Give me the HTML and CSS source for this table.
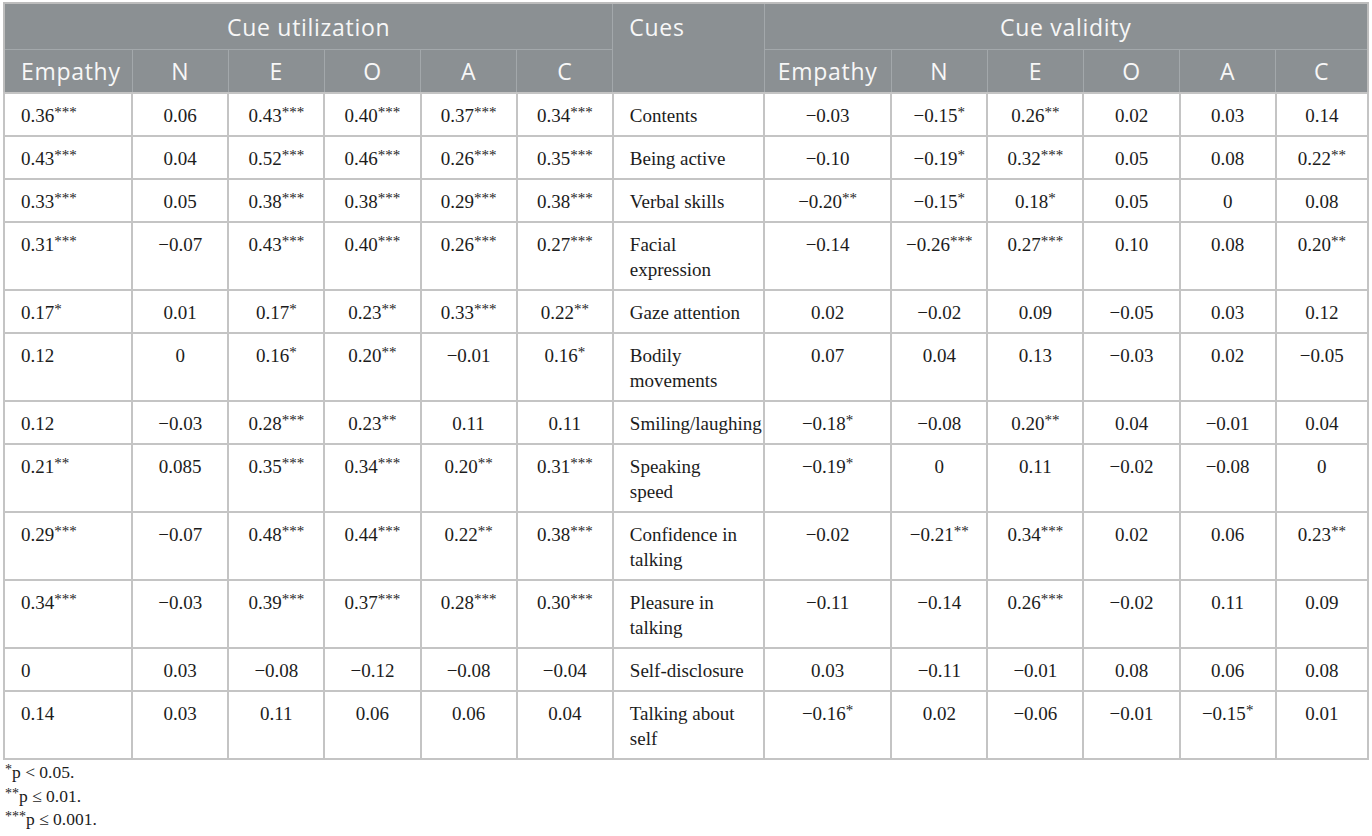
FILE: index.html
```html
<!DOCTYPE html>
<html lang="en">
<head>
    <meta charset="UTF-8">
    <meta name="viewport" content="width=device-width, initial-scale=1.0">
    <title>Cue utilization and cue validity</title>
    <link rel="stylesheet" href="styles.css">
</head>
<body>
    <div class="table-wrap">
        <table class="cues-table">
            <colgroup>
                <col class="c-emp">
                <col class="c-num"><col class="c-num"><col class="c-num"><col class="c-num"><col class="c-num">
                <col class="c-cue">
                <col class="c-emp2">
                <col class="c-num"><col class="c-num"><col class="c-num"><col class="c-num">
                <col class="c-last">
            </colgroup>
            <thead>
                <tr class="head-top">
                    <th colspan="6">Cue utilization</th>
                    <th rowspan="2" class="left">Cues</th>
                    <th colspan="6">Cue validity</th>
                </tr>
                <tr class="head-sub">
                    <th class="left">Empathy</th>
                    <th>N</th><th>E</th><th>O</th><th>A</th><th>C</th>
                    <th>Empathy</th>
                    <th>N</th><th>E</th><th>O</th><th>A</th><th>C</th>
                </tr>
            </thead>
            <tbody>
                <tr>
                    <td class="left">0.36<sup>***</sup></td><td>0.06</td><td>0.43<sup>***</sup></td><td>0.40<sup>***</sup></td><td>0.37<sup>***</sup></td><td>0.34<sup>***</sup></td>
                    <td class="cue">Contents</td>
                    <td>−0.03</td><td>−0.15<sup>*</sup></td><td>0.26<sup>**</sup></td><td>0.02</td><td>0.03</td><td>0.14</td>
                </tr>
                <tr>
                    <td class="left">0.43<sup>***</sup></td><td>0.04</td><td>0.52<sup>***</sup></td><td>0.46<sup>***</sup></td><td>0.26<sup>***</sup></td><td>0.35<sup>***</sup></td>
                    <td class="cue">Being active</td>
                    <td>−0.10</td><td>−0.19<sup>*</sup></td><td>0.32<sup>***</sup></td><td>0.05</td><td>0.08</td><td>0.22<sup>**</sup></td>
                </tr>
                <tr>
                    <td class="left">0.33<sup>***</sup></td><td>0.05</td><td>0.38<sup>***</sup></td><td>0.38<sup>***</sup></td><td>0.29<sup>***</sup></td><td>0.38<sup>***</sup></td>
                    <td class="cue">Verbal skills</td>
                    <td>−0.20<sup>**</sup></td><td>−0.15<sup>*</sup></td><td>0.18<sup>*</sup></td><td>0.05</td><td>0</td><td>0.08</td>
                </tr>
                <tr>
                    <td class="left">0.31<sup>***</sup></td><td>−0.07</td><td>0.43<sup>***</sup></td><td>0.40<sup>***</sup></td><td>0.26<sup>***</sup></td><td>0.27<sup>***</sup></td>
                    <td class="cue">Facial expression</td>
                    <td>−0.14</td><td>−0.26<sup>***</sup></td><td>0.27<sup>***</sup></td><td>0.10</td><td>0.08</td><td>0.20<sup>**</sup></td>
                </tr>
                <tr>
                    <td class="left">0.17<sup>*</sup></td><td>0.01</td><td>0.17<sup>*</sup></td><td>0.23<sup>**</sup></td><td>0.33<sup>***</sup></td><td>0.22<sup>**</sup></td>
                    <td class="cue">Gaze attention</td>
                    <td>0.02</td><td>−0.02</td><td>0.09</td><td>−0.05</td><td>0.03</td><td>0.12</td>
                </tr>
                <tr>
                    <td class="left">0.12</td><td>0</td><td>0.16<sup>*</sup></td><td>0.20<sup>**</sup></td><td>−0.01</td><td>0.16<sup>*</sup></td>
                    <td class="cue">Bodily movements</td>
                    <td>0.07</td><td>0.04</td><td>0.13</td><td>−0.03</td><td>0.02</td><td>−0.05</td>
                </tr>
                <tr>
                    <td class="left">0.12</td><td>−0.03</td><td>0.28<sup>***</sup></td><td>0.23<sup>**</sup></td><td>0.11</td><td>0.11</td>
                    <td class="cue nowrap">Smiling/laughing</td>
                    <td>−0.18<sup>*</sup></td><td>−0.08</td><td>0.20<sup>**</sup></td><td>0.04</td><td>−0.01</td><td>0.04</td>
                </tr>
                <tr>
                    <td class="left">0.21<sup>**</sup></td><td>0.085</td><td>0.35<sup>***</sup></td><td>0.34<sup>***</sup></td><td>0.20<sup>**</sup></td><td>0.31<sup>***</sup></td>
                    <td class="cue">Speaking speed</td>
                    <td>−0.19<sup>*</sup></td><td>0</td><td>0.11</td><td>−0.02</td><td>−0.08</td><td>0</td>
                </tr>
                <tr>
                    <td class="left">0.29<sup>***</sup></td><td>−0.07</td><td>0.48<sup>***</sup></td><td>0.44<sup>***</sup></td><td>0.22<sup>**</sup></td><td>0.38<sup>***</sup></td>
                    <td class="cue">Confidence in talking</td>
                    <td>−0.02</td><td>−0.21<sup>**</sup></td><td>0.34<sup>***</sup></td><td>0.02</td><td>0.06</td><td>0.23<sup>**</sup></td>
                </tr>
                <tr>
                    <td class="left">0.34<sup>***</sup></td><td>−0.03</td><td>0.39<sup>***</sup></td><td>0.37<sup>***</sup></td><td>0.28<sup>***</sup></td><td>0.30<sup>***</sup></td>
                    <td class="cue">Pleasure in talking</td>
                    <td>−0.11</td><td>−0.14</td><td>0.26<sup>***</sup></td><td>−0.02</td><td>0.11</td><td>0.09</td>
                </tr>
                <tr>
                    <td class="left">0</td><td>0.03</td><td>−0.08</td><td>−0.12</td><td>−0.08</td><td>−0.04</td>
                    <td class="cue nowrap">Self-disclosure</td>
                    <td>0.03</td><td>−0.11</td><td>−0.01</td><td>0.08</td><td>0.06</td><td>0.08</td>
                </tr>
                <tr>
                    <td class="left">0.14</td><td>0.03</td><td>0.11</td><td>0.06</td><td>0.06</td><td>0.04</td>
                    <td class="cue">Talking about self</td>
                    <td>−0.16<sup>*</sup></td><td>0.02</td><td>−0.06</td><td>−0.01</td><td>−0.15<sup>*</sup></td><td>0.01</td>
                </tr>
            </tbody>
        </table>
        <div class="notes">
            <p><sup>*</sup>p &lt; 0.05.</p>
            <p><sup>**</sup>p ≤ 0.01.</p>
            <p><sup>***</sup>p ≤ 0.001.</p>
        </div>
    </div>
</body>
</html>
```

FILE: styles.css
```css
body {
    margin: 0;
    background-color: #ffffff;
    font-family: "Liberation Serif", "Times New Roman", serif;
    color: #1c1c1c;
}
.table-wrap {
    padding: 2px 2px 0 3px;
}
.cues-table {
    width: 1366px;
    table-layout: fixed;
    border-collapse: collapse;
    border: 2px solid #bdbdbd;
}
.c-emp { width: 128px; }
.c-num { width: 96px; }
.c-cue { width: 151px; }
.c-emp2 { width: 127px; }
.c-last { width: 92px; }

th {
    background-color: #8b9093;
    color: #f7f7f7;
    font-family: "Open Sans", "Noto Sans", sans-serif;
    font-weight: 400;
    font-size: 23px;
    letter-spacing: 0.7px;
    line-height: 24px;
    text-align: center;
    vertical-align: top;
    border: 1px solid #a3a8ab;
    padding: 9px 10px 9px;
}
.head-top th {
    padding: 11px 10px 10px;
}
th.left {
    text-align: left;
    padding-left: 16px;
}

td {
    font-size: 19px;
    line-height: 25px;
    text-align: center;
    vertical-align: top;
    border: 2px solid #c4c4c4;
    padding: 9px 8px 7px;
}
td.left {
    text-align: left;
    padding-left: 16px;
}
td.cue {
    text-align: left;
    padding-left: 16px;
    padding-right: 20px;
}
td.nowrap {
    white-space: nowrap;
    padding-right: 0;
}
sup {
    font-size: 15px;
    line-height: 0;
    vertical-align: 5px;
}

.notes {
    padding: 1px 0 0 2px;
}
.notes p {
    margin: 0;
    font-size: 17.5px;
    line-height: 23.5px;
}
.notes sup {
    font-size: 14px;
    vertical-align: 4px;
}
```
